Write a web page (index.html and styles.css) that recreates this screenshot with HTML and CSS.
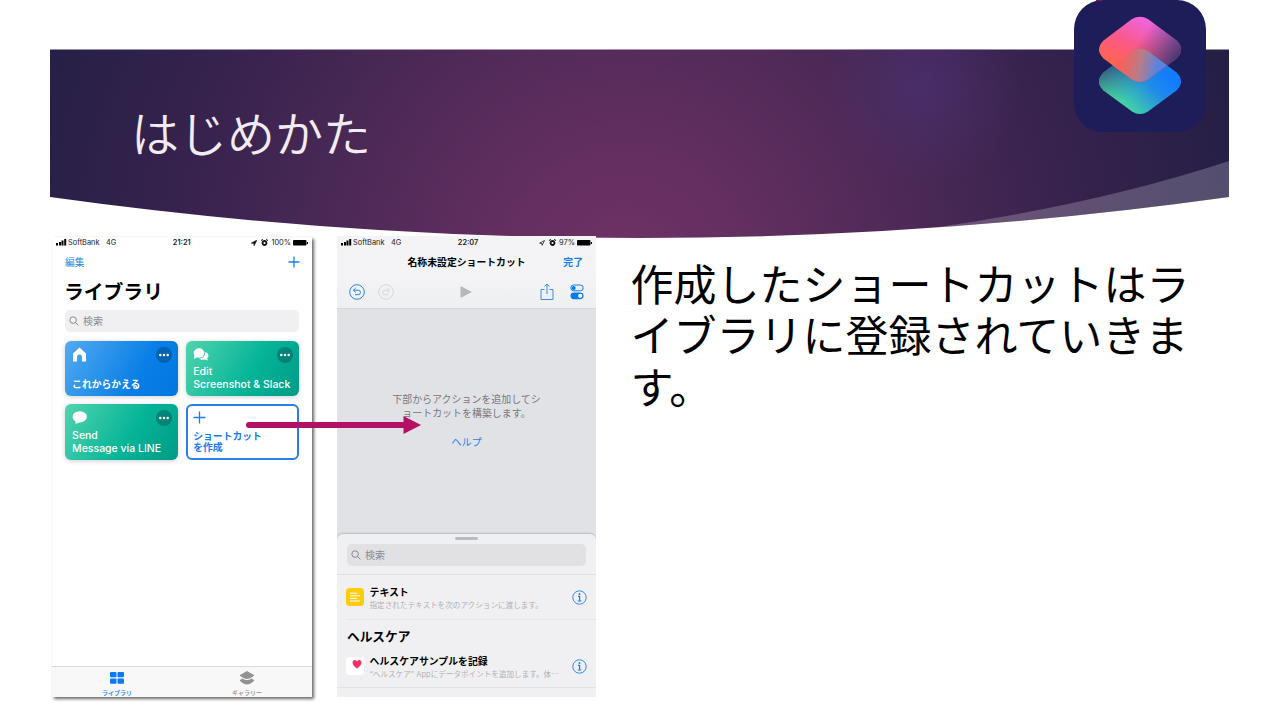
FILE: index.html
```html
<!DOCTYPE html>
<html lang="ja">
<head>
<meta charset="utf-8">
<title>はじめかた</title>
<link rel="stylesheet" href="styles.css">
</head>
<body>
<div class="slide">
  <header class="banner">
    <svg class="banner-wave" width="1179" height="189" viewBox="50 49 1179 189"><path d="M850 238Q1065 215 1229 161V238Z" fill="#fff" fill-opacity=".21"/></svg>
    <h1 class="heading">はじめかた</h1>
  </header>
  <svg class="logo" width="132" height="132" viewBox="1074 0 132 132">
    <defs>
      <linearGradient id="low" x1="1165" y1="42" x2="1128" y2="80" gradientUnits="userSpaceOnUse"><stop offset="0" stop-color="#127cff"/><stop offset=".35" stop-color="#218be8"/><stop offset="1" stop-color="#45d89e"/></linearGradient>
      <linearGradient id="lowfade" x1="1108" y1="32" x2="1127" y2="66" gradientUnits="userSpaceOnUse"><stop offset="0" stop-color="#354573" stop-opacity=".9"/><stop offset="1" stop-color="#3f9590" stop-opacity="0"/></linearGradient>
      <linearGradient id="high" x1="1143" y1="19" x2="1119" y2="66" gradientUnits="userSpaceOnUse"><stop offset="0" stop-color="#f063dc"/><stop offset=".5" stop-color="#f9598c"/><stop offset="1" stop-color="#ff6450"/></linearGradient>
      <linearGradient id="highfade" x1="1141" y1="37" x2="1176" y2="60" gradientUnits="userSpaceOnUse"><stop offset="0" stop-color="#554075" stop-opacity="0"/><stop offset="1" stop-color="#483872"/></linearGradient>
      <linearGradient id="cross" x1="1122" y1="31" x2="1157" y2="38" gradientUnits="userSpaceOnUse"><stop offset="0" stop-color="#f5625b"/><stop offset=".5" stop-color="#b97c88"/><stop offset="1" stop-color="#5a83df"/></linearGradient>
      <path id="diamond" d="M1132 19Q1140 14.500 1148 19L1176.500 40.500Q1185.500 49.500 1176.500 58.500L1148 79.500Q1140 84.500 1132 79.500L1103.500 58.500Q1094.500 49.500 1103.500 40.500Z"/>
      <clipPath id="topclip"><use href="#diamond"/></clipPath>
    </defs>
    <rect x="1074" y="0" width="132" height="132" rx="29" fill="#1c1d59"/>
    <path d="M1096 0h8l-8 1.500z" fill="#76184e"/>
    <use href="#diamond" y="32" fill="url(#low)"/><use href="#diamond" y="32" fill="url(#lowfade)"/>
    <use href="#diamond" fill="url(#high)"/><use href="#diamond" fill="url(#highfade)"/>
    <g clip-path="url(#topclip)"><use href="#diamond" y="32" fill="url(#cross)"/></g>
  </svg>

  <main class="content">
    <section class="phone library">
      <div class="status">
        <svg class="signal" width="11" height="7"><path d="M0 4h2v2.500H0zM3 3h2v3.500H3zM5.500 1.500h2v5h-2zM8.200 0h2v6.500h-2z"/></svg>
        <span class="carrier">SoftBank</span><span>4G</span><b class="clock">21:21</b>
        <svg class="locate" width="6" height="6"><path d="M6 0L0 3.200l2.900.2L3 6z" stroke="#222" stroke-width=".5"/></svg>
        <svg class="alarm" width="7" height="7" viewBox="0 0 7 7"><circle cx="3.500" cy="4" r="2" fill="none" stroke="#111" stroke-width="1.800"/><path d="M.3 1.700L1.700.3M6.700 1.700L5.300.3" stroke="#111" stroke-width="1.100"/></svg>
        <span class="percent">100%</span>
        <svg width="15" height="6"><rect width="13.500" height="5.500" rx="1"/><path d="M14 2h1v2h-1z"/></svg>
      </div>
      <div class="nav"><span>編集</span><svg width="12" height="12"><path d="M6 .5v11M.5 6h11" stroke="#1680ea" stroke-width="1.300"/></svg></div>
      <h2 class="page-title">ライブラリ</h2>
      <div class="search"><svg width="10" height="10" viewBox="0 0 10 10"><circle cx="4.100" cy="4.100" r="3.300" fill="none" stroke="#88898e"/><path d="M6.500 6.500l2.900 2.900" stroke="#88898e"/></svg><span>検索</span></div>
      <div class="cards">
        <div class="card blue">
          <div class="card-top"><svg width="15" height="15"><path d="M7.500.5L1 6.500V14.500h4V10.500Q5 7.500 7.500 7.500T10 10.500v4h4V6.500Z" fill="#fff"/></svg><svg class="more" width="16" height="16"><circle cx="8" cy="8" r="8"/><g fill="#fff"><circle cx="4.300" cy="8" r="1.250"/><circle cx="8" cy="8" r="1.250"/><circle cx="11.700" cy="8" r="1.250"/></g></svg></div>
          <p class="ja">これからかえる</p>
        </div>
        <div class="card green">
          <div class="card-top"><svg width="16" height="15"><ellipse cx="6" cy="6" rx="5.400" ry="4.700" fill="#fff"/><path d="M1.500 8.500L.8 12l4-2zM12.500 5a4 3.700 0 0 1 1.700 6.300l.7 2.200-3-1.100A5 4 0 0 1 6 11.500Q12 11 12.500 5Z" fill="#fff"/></svg><svg class="more" width="16" height="16"><circle cx="8" cy="8" r="8"/><g fill="#fff"><circle cx="4.300" cy="8" r="1.250"/><circle cx="8" cy="8" r="1.250"/><circle cx="11.700" cy="8" r="1.250"/></g></svg></div>
          <p>Edit<br>Screenshot &amp; Slack</p>
        </div>
        <div class="card green">
          <div class="card-top"><svg width="16" height="15"><ellipse cx="7.700" cy="6.800" rx="7.200" ry="5.600" fill="#fff"/><path d="M3.500 10v4l4.500-2z" fill="#fff"/></svg><svg class="more" width="16" height="16"><circle cx="8" cy="8" r="8"/><g fill="#fff"><circle cx="4.300" cy="8" r="1.250"/><circle cx="8" cy="8" r="1.250"/><circle cx="11.700" cy="8" r="1.250"/></g></svg></div>
          <p>Send<br>Message via LINE</p>
        </div>
        <div class="card create">
          <div class="card-top"><svg width="13" height="13"><path d="M6.500.5v12M.5 6.500h12" stroke="#1b7df0" stroke-width="1.300"/></svg></div>
          <p class="ja">ショートカット<br>を作成</p>
        </div>
      </div>
      <div class="tabs">
        <div class="tab active"><svg width="16" height="14"><g fill="#087bf5"><rect x="1" y="1" width="6.500" height="5.300" rx="1"/><rect x="8.500" y="1" width="6.500" height="5.300" rx="1"/><rect x="1" y="7.500" width="6.500" height="5.300" rx="1"/><rect x="8.500" y="7.500" width="6.500" height="5.300" rx="1"/></g></svg><span>ライブラリ</span></div>
        <div class="tab"><svg width="16" height="14"><path d="M8 0Q5.500 1.500 1 4q0 .5 0 .8Q5.500 8 8 8t7-3.200V4Q10.500 1.500 8 0ZM1 9l2.500-1.500Q8 10.500 12.500 7.500L15 9v1q-4 3.500-7 3.500T1 10Z" fill="#929292"/></svg><span>ギャラリー</span></div>
      </div>
    </section>

    <section class="phone editor">
      <div class="status">
        <svg class="signal" width="11" height="7"><path d="M0 4h2v2.500H0zM3 3h2v3.500H3zM5.500 1.500h2v5h-2zM8.200 0h2v6.500h-2z"/></svg>
        <span class="carrier">SoftBank</span><span>4G</span><b class="clock">22:07</b>
        <svg class="locate" width="6" height="6"><path d="M5.500.5L.6 3.200l2.400.2.1 2z" fill="none" stroke="#222" stroke-width=".8"/></svg>
        <svg class="alarm" width="7" height="7" viewBox="0 0 7 7"><circle cx="3.500" cy="4" r="2" fill="none" stroke="#111" stroke-width="1.800"/><path d="M.3 1.700L1.700.3M6.700 1.700L5.300.3" stroke="#111" stroke-width="1.100"/></svg>
        <span class="percent">97%</span>
        <svg width="15" height="6"><rect width="13.500" height="5.500" rx="1"/><path d="M14 2h1v2h-1z"/></svg>
      </div>
      <div class="editor-nav"><b class="name">名称未設定ショートカット</b><b class="done">完了</b></div>
      <div class="toolbar">
        <svg width="16" height="16" fill="none" stroke="#2584e8"><circle cx="8" cy="8" r="7.300"/><path d="M6.700 4L4.400 6.200l2.300 2.200M4.500 6.200h4.700a2.200 2.200 0 0 1 0 4.500H6"/></svg>
        <svg class="redo" width="16" height="16" fill="none" stroke="#d6d7da"><circle cx="8" cy="8" r="7.300"/><path d="M9.300 4l2.300 2.200-2.300 2.200M11.500 6.200H6.800a2.200 2.200 0 0 0 0 4.500H10"/></svg>
        <svg class="play" width="12" height="12"><path d="M.5 0L12 6 .5 12z" fill="#b7b8bb"/></svg>
        <svg class="share" width="14" height="18" fill="none" stroke="#3b8bed"><path d="M4.500 6.500H1v10h12v-10H9.500M7 11V1M4.500 3.500L7 1l2.500 2.500"/></svg>
        <svg class="toggles" width="14" height="16"><rect x=".8" y="1" width="12.400" height="5.800" rx="2.900" fill="none" stroke="#167bed"/><circle cx="3.700" cy="3.900" r="2" fill="#087af2"/><rect x=".5" y="8.500" width="13" height="6.700" rx="3.350" fill="#087af2"/><circle cx="10.200" cy="11.800" r="2.100" fill="#fff"/></svg>
      </div>
      <div class="workspace"><p>下部からアクションを追加してシ<br>ョートカットを構築します。</p><span class="help">ヘルプ</span></div>
      <div class="sheet">
        <div class="handle"></div>
        <div class="search"><svg width="10" height="10" viewBox="0 0 10 10"><circle cx="4.100" cy="4.100" r="3.300" fill="none" stroke="#88898e"/><path d="M6.500 6.500l2.900 2.900" stroke="#88898e"/></svg><span>検索</span></div>
        <div class="action first">
          <svg class="action-icon" width="18" height="18"><rect width="18" height="18" rx="3.500" fill="#fdcc0c"/><path d="M4 5.200h7M4 7.800h10M4 10.400h7M4 13h10" stroke="#fff"/></svg>
          <div class="action-copy"><b>テキスト</b><span>指定されたテキストを次のアクションに渡します。</span></div>
          <svg class="info" width="15" height="15"><circle cx="7.500" cy="7.500" r="6.700" fill="none" stroke="#328ae8"/><circle cx="7.500" cy="4" r="1" fill="#1480ea"/><path d="M6 6.400h1.600v4.500M5.800 11h3.600" fill="none" stroke="#1480ea" stroke-width="1.200"/></svg>
        </div>
        <h3 class="group">ヘルスケア</h3>
        <div class="action second">
          <svg class="action-icon" width="18" height="18"><rect width="18" height="18" rx="3.500" fill="#fff"/><path d="M11 11.500Q6.500 8.500 6.500 5.500Q6.700 3 8.800 3.100Q10.300 3.200 11 4.500Q11.800 3.100 13.300 3.100Q15.500 3.200 15.500 5.600Q15.300 8.500 11 11.500Z" fill="#fa2f68"/></svg>
          <div class="action-copy"><b>ヘルスケアサンプルを記録</b><span class="health">“ヘルスケア” Appにデータポイントを追加します。体⋯</span></div>
          <svg class="info" width="15" height="15"><circle cx="7.500" cy="7.500" r="6.700" fill="none" stroke="#328ae8"/><circle cx="7.500" cy="4" r="1" fill="#1480ea"/><path d="M6 6.400h1.600v4.500M5.800 11h3.600" fill="none" stroke="#1480ea" stroke-width="1.200"/></svg>
        </div>
      </div>
    </section>
    <p class="message">作成したショートカットはライブラリに登録されていきます。</p>
  </main>
  <svg class="arrow" width="176" height="20"><path d="M3 10h157" stroke="#b31166" stroke-width="6" stroke-linecap="round"/><path d="M157.500 1L175 10l-17.500 9z" fill="#b31166"/></svg>
</div>
</body>
</html>
```
FILE: styles.css
```css
* { box-sizing: border-box; }
body { margin: 0; background: #fff; }
h1, h2, h3, p { margin: 0; }
svg { display: block; flex: none; }
.slide { position: relative; width: 1280px; height: 720px; overflow: hidden; padding-top: 49px; font-family: "Noto Sans CJK JP", sans-serif; }

.banner {
  position: relative; width: 1179px; height: 189px; margin-left: 50px; padding: 48px 0 0 81px;
  background:
    radial-gradient(circle 100px at 872px 36px, rgba(76, 50, 118, .6), rgba(76, 50, 118, 0)),
    radial-gradient(circle 660px at 575px 225px, #6f3264, #642f61 18%, #4c2956 44%, #35224d 70%, #251f46 95%);
  clip-path: path("M0 .5H1179V148Q589.500 230 0 148Z");
}
.banner-wave { position: absolute; left: 0; top: 0; }
.heading { position: relative; color: #f1ebf2; font-size: 48px; line-height: 68px; font-weight: 350; }
.logo { position: absolute; left: 1074px; top: 0; }
.arrow { position: absolute; left: 246px; top: 415px; }

.content { display: flex; align-items: flex-start; margin-top: -2px; padding-left: 52px; position: relative; }
.phone { flex: none; display: flex; flex-direction: column; font-family: Inter, "Noto Sans CJK JP", sans-serif; }
.library { width: 260px; height: 460px; margin-top: 1px; background: #fff; box-shadow: 2px 2px 3px rgba(0, 0, 0, .6); }
.editor { width: 259px; height: 461px; margin-left: 25px; background: #e1e2e6; overflow: hidden; }
.status { display: flex; align-items: center; height: 11px; padding: 0 4px; font-size: 7.400px; line-height: 11px; white-space: nowrap; color: #222; }
.signal { margin-right: 1px; }
.carrier { width: 38px; }
.clock { margin-left: 56.500px; font-weight: 600; width: 22px; }
.locate { margin-left: auto; margin-right: 4px; }
.alarm { margin-right: 3px; }
.percent { margin-right: 2px; }

.nav { display: flex; align-items: center; justify-content: space-between; height: 28px; padding: 0 12px 0 13px; font-size: 9.700px; color: #2585e7; }
.page-title { height: 33px; padding: 1px 0 0 12px; font-size: 19.800px; line-height: 30px; font-weight: 700; color: #000; }
.search { flex: none; display: flex; align-items: center; gap: 4px; height: 22px; padding-left: 4px; border-radius: 5px; font-size: 10px; line-height: 20px; color: #8b8b90; }
.library .search { margin: 1px 13px 0; background: #f0f0f2; }
.cards { display: grid; grid-template-columns: 113.500px 113.500px; grid-auto-rows: 55.300px; gap: 8px 7.700px; margin: 9.200px 0 0 12.600px; }
.card { display: flex; flex-direction: column; justify-content: space-between; border-radius: 6px; padding: 6px 6px 5px 7.500px; color: #fff; font-size: 10.500px; line-height: 13px; font-weight: 500; white-space: nowrap; box-shadow: 0 1px 5px rgba(0, 0, 0, .2); }
.card-top { display: flex; justify-content: space-between; height: 16px; }
.ja { font-size: 9.800px; line-height: 13px; font-weight: 600; }
.blue { background: linear-gradient(120deg, #54aaf0, #087fe6 65%, #0078df); }
.green { background: linear-gradient(120deg, #51d4ae, #05b497 58%, #009b86); }
.more { fill: rgba(0, 40, 60, .3); }
.create { border: 2px solid #287eea; color: #197bec; background: #fff; box-shadow: none; padding: 5px 5px 5px 5.500px; }
.create .ja { line-height: 11px; }
.tabs { display: grid; grid-template-columns: 1fr 1fr; height: 31px; margin-top: auto; background: #f8f8f8; border-top: 1px solid #d9d9db; }
.tab { display: flex; flex-direction: column; align-items: center; padding-top: 4px; color: #929292; font-size: 6px; line-height: 9px; }
.tab span { margin-top: 3px; font-weight: 500; }
.active { color: #087bf5; }

.editor .status, .editor-nav, .toolbar { background: #f4f4f6; }
.editor .status { height: 13px; }
.editor-nav { display: grid; grid-template-columns: 1fr 118px 1fr; align-items: center; height: 26px; font-size: 9.850px; white-space: nowrap; }
.name { grid-column: 2; }
.done { color: #1679e8; font-weight: 600; justify-self: end; margin-right: 13px; }
.toolbar { display: flex; align-items: center; height: 34px; padding: 0 12px; border-bottom: 1px solid #d7d8db; background: linear-gradient(#f4f4f6, #eeeff1); }
.redo { margin-left: 13px; }
.play { margin-left: 66px; }
.share { margin-left: auto; }
.toggles { margin-left: 16px; }
.workspace { flex: 1; display: flex; flex-direction: column; align-items: center; padding-top: 82.500px; color: #77787c; font-size: 9.960px; line-height: 14px; text-align: center; }
.help { margin-top: 15px; color: #2585ed; font-size: 10.200px; }
.sheet { height: 163px; background: #f0f0f3; border-radius: 6px 6px 0 0; box-shadow: 0 -1px 2px rgba(0, 0, 0, .18); }
.handle { width: 23px; height: 3px; margin: 0 auto; border-radius: 2px; background: #babbbf; transform: translateY(3px); }
.sheet .search { margin: 7px 10px 8px 10px; background: #e1e1e4; }
.action { display: flex; padding-left: 9px; }
.first { height: 45px; border-top: 1px solid #e0e0e3; padding-top: 13px; }
.action-copy { flex: 1; display: flex; flex-direction: column; margin-left: 5.500px; white-space: nowrap; }
.action-copy b { font-size: 9.900px; line-height: 13px; margin-top: -2px; }
.action-copy span { font-size: 7.600px; line-height: 13px; color: #b0b0b4; }
.action-copy .health { font-size: 7.580px; }
.info { margin: 2px 9px 0 0; }
.group { margin-left: 10px; height: 37px; border-top: 1px solid #e4e4e7; line-height: 33px; font-size: 12.700px; font-weight: 600; }
.second { height: 32px; padding-top: 1px; border-bottom: 1px solid #e2e2e5; }

.message { width: 570px; margin: 20.500px 0 0 34.500px; font-size: 43px; line-height: 51.500px; color: #000; }
```
